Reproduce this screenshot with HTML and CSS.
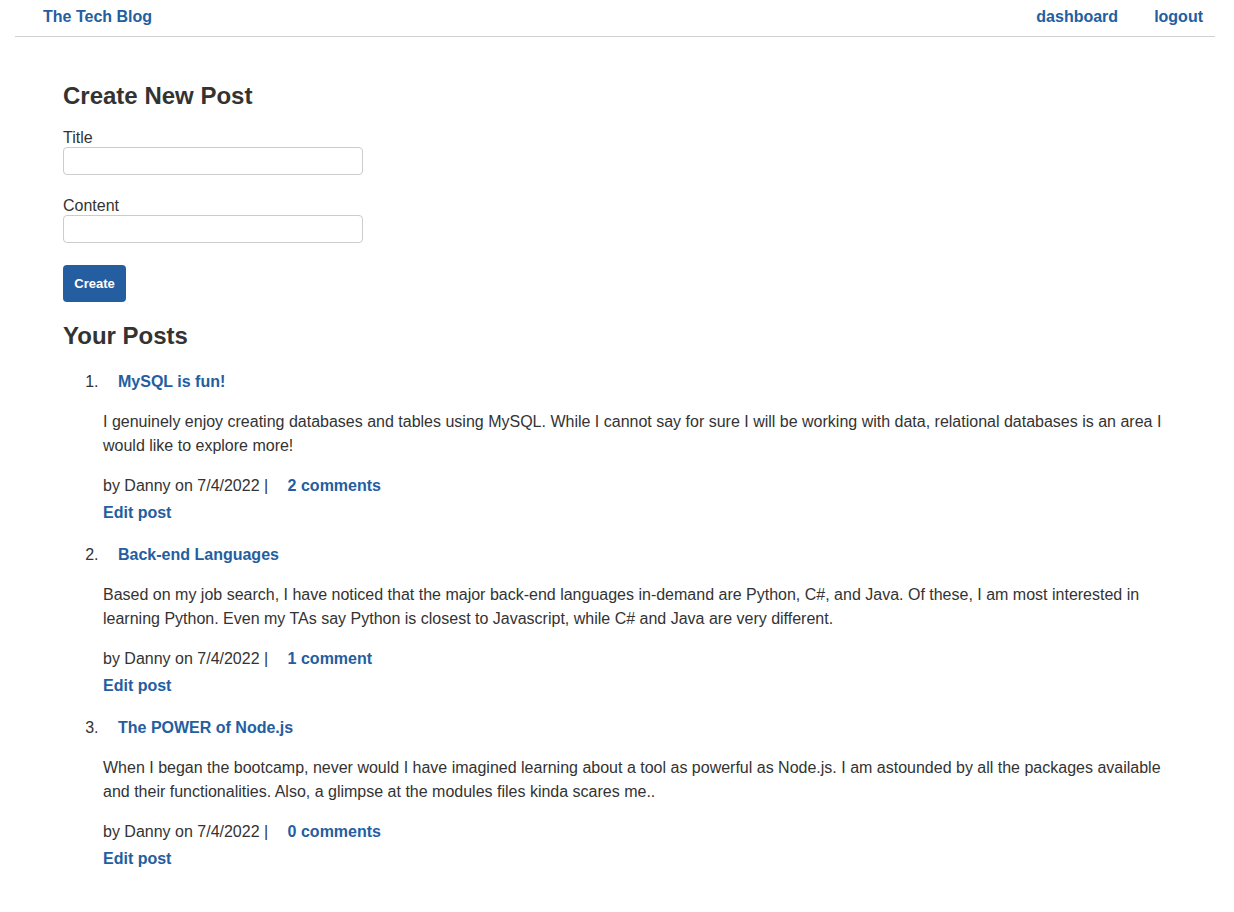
FILE: index.html
```html
<!DOCTYPE html>
<html lang="en">
<head>
<meta charset="utf-8">
<title>The Tech Blog</title>
<link rel="stylesheet" href="styles.css">
</head>
<body>
<header class="nav">
  <a class="brand" href="#">The Tech Blog</a>
  <div class="nav-links">
    <a href="#">dashboard</a>
    <a href="#">logout</a>
  </div>
</header>
<main class="main">
  <h2 class="heading">Create New Post</h2>
  <form class="post-form">
    <label class="label" for="title">Title</label>
    <input class="input" id="title" type="text">
    <label class="label label-gap" for="content">Content</label>
    <input class="input" id="content" type="text">
    <button class="btn" type="button">Create</button>
  </form>
  <h2 class="heading heading-posts">Your Posts</h2>
  <ol class="posts">
    <li class="post">
      <a class="post-title" href="#">MySQL is fun!</a>
      <p class="post-body">I genuinely enjoy creating databases and tables using MySQL. While I cannot say for sure I will be working with data, relational databases is an area I would like to explore more!</p>
      <p class="meta">by Danny on 7/4/2022 | <a class="comments" href="#">2 comments</a></p>
      <a class="edit" href="#">Edit post</a>
    </li>
    <li class="post">
      <a class="post-title" href="#">Back-end Languages</a>
      <p class="post-body">Based on my job search, I have noticed that the major back-end languages in-demand are Python, C#, and Java. Of these, I am most interested in learning Python. Even my TAs say Python is closest to Javascript, while C# and Java are very different.</p>
      <p class="meta">by Danny on 7/4/2022 | <a class="comments" href="#">1 comment</a></p>
      <a class="edit" href="#">Edit post</a>
    </li>
    <li class="post">
      <a class="post-title" href="#">The POWER of Node.js</a>
      <p class="post-body">When I began the bootcamp, never would I have imagined learning about a tool as powerful as Node.js. I am astounded by all the packages available and their functionalities. Also, a glimpse at the modules files kinda scares me..</p>
      <p class="meta">by Danny on 7/4/2022 | <a class="comments" href="#">0 comments</a></p>
      <a class="edit" href="#">Edit post</a>
    </li>
  </ol>
</main>
</body>
</html>
```
FILE: styles.css
```css
* { box-sizing: border-box; }
html, body { margin: 0; padding: 0; background: #fff; }
body {
  font-family: "Liberation Sans", Arial, Helvetica, sans-serif;
  font-size: 16px;
  color: #333;
}
a { color: #245ea0; font-weight: bold; text-decoration: none; }

.nav {
  margin: 0 19px 0 15px;
  padding: 1px 12px 3px 28px;
  border-bottom: 1px solid #d0d0d0;
  display: flex;
  justify-content: space-between;
  align-items: center;
  line-height: 32px;
}
.nav-links { display: flex; gap: 36px; }

.main { padding: 45px 63px 40px; }
.heading {
  margin: 0;
  font-size: 24px;
  line-height: 28px;
  font-weight: bold;
  color: #333;
}
.post-form { display: flex; flex-direction: column; align-items: flex-start; margin-top: 19px; }
.label { line-height: 18px; margin-bottom: 0; }
.label-gap { margin-top: 22px; }
.input {
  width: 300px;
  height: 28px;
  border: 1px solid #ccc;
  border-radius: 4px;
  background: #fff;
  padding: 2px 6px;
  font: inherit;
}
.btn {
  margin-top: 22px;
  width: 63px;
  height: 37px;
  border: none;
  border-radius: 4px;
  background: #245ea0;
  color: #fff;
  font-family: "Liberation Sans", Arial, sans-serif;
  font-size: 13px;
  font-weight: bold;
  padding: 0;
}
.heading-posts { margin-top: 20px; }

.posts { margin: 22px 0 0; padding-left: 40px; }
.post { margin-bottom: 20px; line-height: 20px; }
.post-title { display: inline-block; margin-left: 15px; line-height: 20px; }
.post-body { margin: 18px 0 0; line-height: 24px; }
.meta { margin: 16px 0 0; line-height: 24px; }
.comments { margin-left: 15px; }
.edit { display: block; margin-top: 3px; line-height: 24px; }
```
